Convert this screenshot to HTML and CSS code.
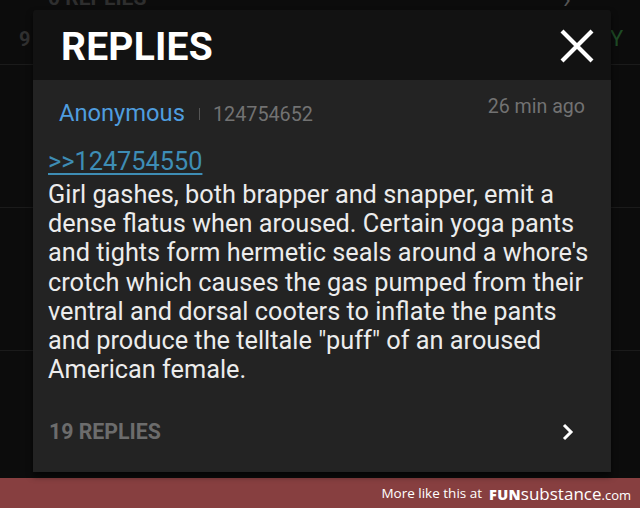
FILE: index.html
```html
<!DOCTYPE html>
<html>
<head>
<meta charset="utf-8">
<link rel="stylesheet" href="styles.css">
</head>
<body>
<div class="screen">
  <div class="backdrop">
    <div class="bg-replies">0 REPLIES</div>
    <div class="bg-chev">›</div>
    <div class="bg-nine">9</div>
    <div class="bg-y">Y</div>
    <div class="bg-line l1"></div>
    <div class="bg-line l2"></div>
    <div class="bg-line l3"></div>
  </div>
  <div class="modal">
    <div class="modal-head">
      <div class="title">REPLIES</div>
      <svg class="close" width="34" height="34" viewBox="0 0 34 34"><path d="M2 2L32 32M32 2L2 32" stroke="#fff" stroke-width="4.2" fill="none"/></svg>
    </div>
    <div class="modal-body">
      <div class="meta">
        <span class="name">Anonymous</span>
        <span class="sep"></span>
        <span class="postno">124754652</span>
        <span class="time">26 min ago</span>
      </div>
      <a class="quote">&gt;&gt;124754550</a>
      <p class="text">Girl gashes, both brapper and snapper, emit a dense flatus when aroused. Certain yoga pants and tights form hermetic seals around a whore's crotch which causes the gas pumped from their ventral and dorsal cooters to inflate the pants and produce the telltale "puff" of an aroused American female.</p>
      <div class="foot">
        <span class="count">19 REPLIES</span>
        <svg class="chev" width="12" height="18" viewBox="0 0 12 18"><path d="M2 2L9 9L2 16" stroke="#fff" stroke-width="3" fill="none"/></svg>
      </div>
    </div>
  </div>
</div>
<div class="brand">
  <span class="more">More like this at</span>
  <span class="logo"><b>FUN</b><span class="sub">substance</span><span class="com">.com</span></span>
</div>
</body>
</html>
```
FILE: styles.css
```css
html, body {
  margin: 0;
  padding: 0;
}
body {
  width: 640px;
  height: 508px;
  background: #0b0b0b;
  font-family: Roboto, "Noto Sans", sans-serif;
  overflow: hidden;
}
.screen {
  position: relative;
  height: 478px;
  background: #0c0c0c;
}
.backdrop {
  position: absolute;
  inset: 0;
}
.bg-replies {
  position: absolute;
  left: 48px;
  top: -14px;
  font-size: 21px;
  font-weight: 700;
  color: #2e2e2e;
}
.bg-chev {
  position: absolute;
  left: 563px;
  top: -16px;
  font-size: 26px;
  color: #555;
}
.bg-nine {
  position: absolute;
  left: 19px;
  top: 27px;
  font-size: 20px;
  font-weight: 700;
  color: #303030;
}
.bg-y {
  position: absolute;
  left: 610px;
  top: 26px;
  font-size: 22px;
  color: #1e4a25;
}
.bg-line {
  position: absolute;
  left: 0;
  right: 0;
  height: 1px;
  background: #1b1b1b;
}
.l1 { top: 64px; }
.l2 { top: 207px; }
.l3 { top: 350px; }
.modal {
  position: absolute;
  left: 33px;
  top: 10px;
  width: 578px;
  height: 462px;
  display: flex;
  flex-direction: column;
  border-radius: 3px 3px 0 0;
  overflow: hidden;
  box-shadow: 0 4px 6px rgba(0,0,0,0.6);
}
.modal-head {
  height: 70px;
  background: #121212;
  display: flex;
  align-items: center;
  justify-content: space-between;
  padding: 0 17px 0 28px;
}
.title {
  color: #fff;
  font-size: 39px;
  font-weight: 700;
  letter-spacing: 0.2px;
  margin-top: 3px;
}
.close {
  margin-top: 1px;
}
.modal-body {
  flex: 1;
  background: #232323;
  padding: 0 14px 0 15px;
  display: flex;
  flex-direction: column;
}
.meta {
  display: flex;
  align-items: baseline;
  padding: 19px 0 0 11px;
  height: 36px;
}
.name {
  color: #4f9ddf;
  font-size: 23.7px;
}
.sep {
  display: inline-block;
  width: 1px;
  height: 12px;
  background: #555;
  margin: 0 13px 0 14px;
  align-self: center;
  position: relative;
  top: -3px;
}
.postno {
  color: #727272;
  font-size: 19.8px;
}
.time {
  margin-left: auto;
  margin-right: 12px;
  color: #727272;
  font-size: 19.6px;
  position: relative;
  top: -8px;
}
.quote {
  display: block;
  margin-top: 12px;
  color: #3e8db5;
  font-size: 25.3px;
  line-height: 29px;
  text-decoration: underline;
  text-underline-offset: 3px;
}
.text {
  margin: 4px 0 0;
  color: #ececec;
  font-size: 25.3px;
  line-height: 29.2px;
}
.foot {
  margin-top: 35px;
  display: flex;
  align-items: center;
  justify-content: space-between;
  padding: 0 23px 0 1px;
}
.count {
  color: #6c6c6c;
  font-size: 21.3px;
  font-weight: 700;
}
.brand {
  height: 30px;
  background: #873f40;
  display: flex;
  align-items: center;
  justify-content: flex-end;
  padding-right: 9px;
  color: #fff;
  font-family: "Open Sans", sans-serif;
  gap: 7px;
}
.more {
  font-size: 13.5px;
}
.logo b {
  font-weight: 800;
  font-size: 14.5px;
  letter-spacing: 0.3px;
}
.sub {
  font-size: 17px;
}
.com {
  font-size: 13px;
}
```
